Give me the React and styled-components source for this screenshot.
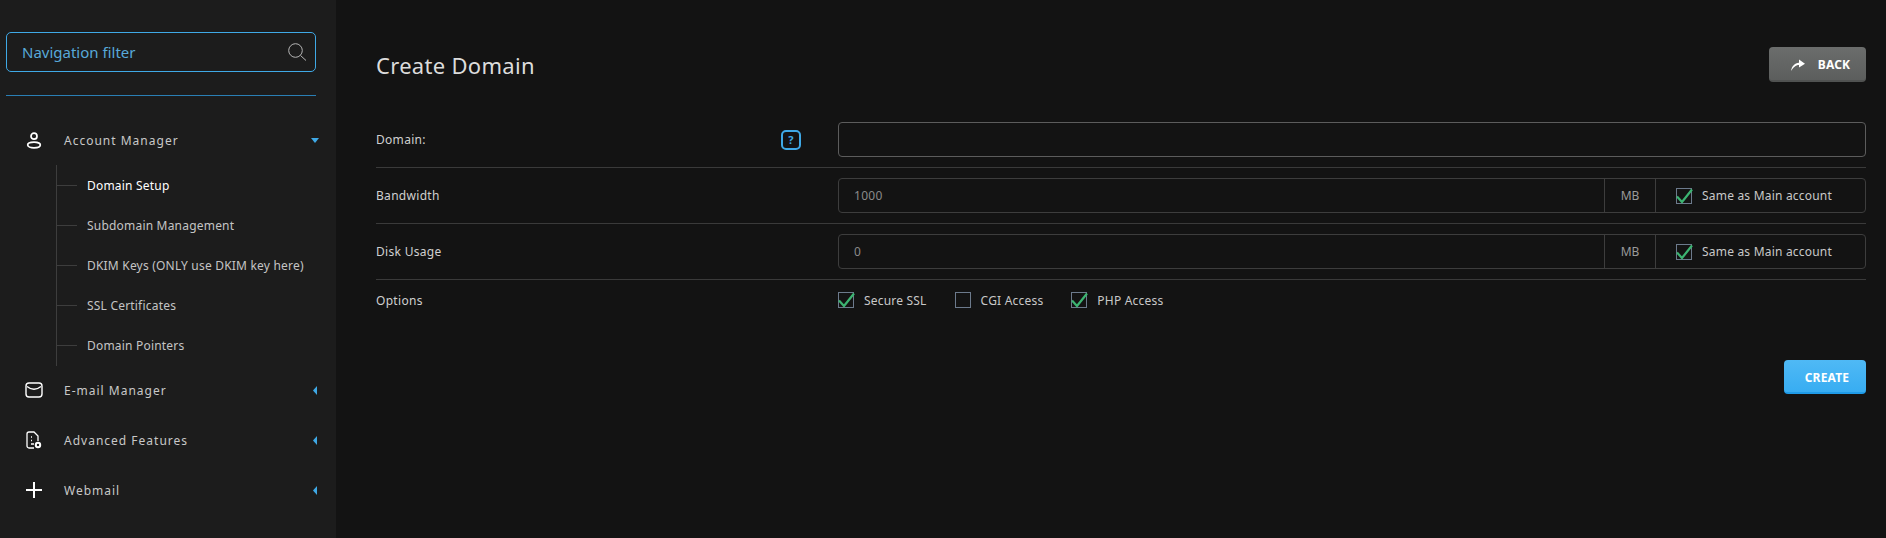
import React from "react";
import styled, { createGlobalStyle } from "styled-components";

const Global = createGlobalStyle`
  html, body { margin: 0; padding: 0; background: #131313; }
  body { font-family: "Noto Sans", "Open Sans", sans-serif; }
  * { box-sizing: border-box; }
`;

const Page = styled.div`
  display: flex;
  width: 1886px;
  height: 538px;
  overflow: hidden;
  background: #131313;
`;
const Sidebar = styled.aside`
  width: 336px;
  flex: none;
  background: #1c1c1c;
  padding: 32px 0 0 6px;
`;
const Filter = styled.div`
  width: 310px;
  height: 40px;
  border: 1px solid #3fa9e6;
  border-radius: 5px;
  display: flex;
  align-items: center;
  justify-content: space-between;
  padding: 0 9px 0 15px;
  color: #58a9d9;
  font-size: 15px;
`;
const Rule = styled.div`
  width: 310px;
  height: 1px;
  background: #2a7fb5;
  margin: 23px 0 25px;
`;
const NavRow = styled.div`
  width: 313px;
  height: ${(p) => p.$h}px;
  display: flex;
  align-items: center;
  padding-left: 19px;
  color: #c8c8c8;
  font-size: 12px;
  letter-spacing: 1px;
`;
const NavIcon = styled.span`
  width: 18px;
  height: 20px;
  margin-right: 21px;
  display: flex;
  align-items: center;
  justify-content: center;
  color: #fff;
`;
const NavLabel = styled.span`
  flex: 1;
`;
const SubList = styled.div`
  margin: 6px 0 4px 50px;
  border-left: 1px solid #3d3d3d;
  height: 201px;
`;
const SubItem = styled.div`
  height: 40px;
  display: flex;
  align-items: center;
  font-size: 12px;
  letter-spacing: 0.2px;
  color: ${(p) => (p.$active ? "#ffffff" : "#c4c4c4")};
  &::before {
    content: "";
    width: 20px;
    height: 1px;
    background: #3d3d3d;
    margin-right: 10px;
  }
`;
const Main = styled.main`
  flex: 1;
  padding: 47px 20px 0 40px;
  color: #d0d0d0;
`;
const Header = styled.div`
  display: flex;
  align-items: center;
  justify-content: space-between;
  height: 35px;
  margin-bottom: 40px;
`;
const Title = styled.h1`
  margin: 0;
  font-size: 22px;
  font-weight: 400;
  letter-spacing: 0.3px;
  color: #dcdcdc;
`;
const Button = styled.button`
  height: ${(p) => p.$h}px;
  width: ${(p) => p.$w}px;
  border: none;
  border-bottom: 2px solid ${(p) => p.$edge};
  border-radius: 4px;
  background: ${(p) => p.$bg};
  color: #fff;
  font: 700 12px "Noto Sans", sans-serif;
  letter-spacing: 0.2px;
  display: flex;
  align-items: center;
  justify-content: center;
  gap: 13px;
  padding: 2px 0 0 ${(p) => p.$pad}px;
`;
const Row = styled.div`
  display: flex;
  align-items: center;
  padding-bottom: ${(p) => (p.$last ? 0 : 10)}px;
  margin-bottom: ${(p) => (p.$last ? 0 : 10)}px;
  border-bottom: ${(p) => (p.$last ? "none" : "1px solid #3a3a3a")};
`;
const Label = styled.div`
  width: 462px;
  flex: none;
  display: flex;
  align-items: center;
  justify-content: space-between;
  padding-right: 37px;
  font-size: 12px;
  letter-spacing: 0.3px;
  color: #d0d0d0;
`;
const Help = styled.span`
  width: 20px;
  height: 20px;
  border: 2px solid #3fa9e6;
  border-radius: 5px;
  color: #3fa9e6;
  font-size: 11px;
  font-weight: 700;
  display: flex;
  align-items: center;
  justify-content: center;
`;
const Group = styled.div`
  flex: 1;
  height: 35px;
  display: flex;
  border: 1px solid ${(p) => (p.$strong ? "#5c5c5c" : "#3d3d3d")};
  border-radius: 4px;
`;
const Value = styled.div`
  flex: 1;
  display: flex;
  align-items: center;
  padding-left: 15px;
  font-size: 12px;
  letter-spacing: 0.3px;
  color: #8a8a8a;
`;
const Unit = styled.div`
  width: 52px;
  display: flex;
  align-items: center;
  justify-content: center;
  border-left: 1px solid #3d3d3d;
  border-right: 1px solid #3d3d3d;
  font-size: 12px;
  color: #9a9a9a;
`;
const Same = styled.div`
  width: 209px;
  display: flex;
  align-items: center;
  padding-left: 20px;
`;
const Check = styled.label`
  display: flex;
  align-items: center;
  gap: 10px;
  font-size: 12px;
  letter-spacing: 0.2px;
  color: #c8c8c8;
`;
const Box = styled.span`
  width: 16px;
  height: 16px;
  flex: none;
  border: 1px solid #6c7a8c;
  position: relative;
`;
const Tick = styled.svg`
  position: absolute;
  left: -1px;
  top: -2px;
`;
const Options = styled.div`
  display: flex;
  gap: 28px;
  height: 20px;
  align-items: center;
  letter-spacing: 0;
`;
const Footer = styled.div`
  display: flex;
  justify-content: flex-end;
  margin-top: 50px;
`;

const Checkbox = ({ on, children }) => (
  <Check>
    <Box>
      {on && (
        <Tick width="17" height="18" viewBox="0 0 17 18">
          <path d="M1 9.5 L6 15 L16 2.5" fill="none" stroke="#3cb371" strokeWidth="2.2" />
        </Tick>
      )}
    </Box>
    {children}
  </Check>
);

const OpenCaret = styled.svg`
  flex: none;
`;
const ClosedCaret = styled.svg`
  flex: none;
  margin-right: 2px;
`;
const Caret = ({ open }) =>
  open ? (
    <OpenCaret width="8" height="5" viewBox="0 0 8 5"><path d="M0 0H8L4 5Z" fill="#3fa9e6" /></OpenCaret>
  ) : (
    <ClosedCaret width="4" height="9" viewBox="0 0 4 9"><path d="M4 0V9L0 4.5Z" fill="#3fa9e6" /></ClosedCaret>
  );

const icons = {
  user: (
    <svg width="16" height="17" viewBox="0 0 16 17" fill="none" stroke="#fff" strokeWidth="1.7">
      <circle cx="8" cy="4.2" r="3" />
      <ellipse cx="8" cy="13" rx="6.3" ry="2.8" />
    </svg>
  ),
  mail: (
    <svg width="18" height="16" viewBox="0 0 18 16" fill="none" stroke="#fff" strokeWidth="1.4">
      <rect x="1" y="1" width="16" height="14" rx="3" />
      <path d="M2 4.5 Q9 10 16 4.5" />
    </svg>
  ),
  doc: (
    <svg width="16" height="18" viewBox="0 0 16 18" fill="none" stroke="#fff" strokeWidth="1.3">
      <path d="M8 17H3a2 2 0 0 1-2-2V3a2 2 0 0 1 2-2h5l4 4v5" />
      <path d="M5 6h1M5 9.5h1M5 13h3" strokeWidth="1.5" />
      <circle cx="12" cy="14" r="2.2" strokeWidth="2" />
    </svg>
  ),
  plus: (
    <svg width="16" height="16" viewBox="0 0 16 16" stroke="#fff" strokeWidth="2">
      <path d="M8 0V16M0 8H16" />
    </svg>
  ),
};

const Nav = ({ icon, open, h, children }) => (
  <NavRow $h={h}>
    <NavIcon>{icons[icon]}</NavIcon>
    <NavLabel>{children}</NavLabel>
    <Caret open={open} />
  </NavRow>
);

const subs = [
  "Domain Setup",
  "Subdomain Management",
  "DKIM Keys (ONLY use DKIM key here)",
  "SSL Certificates",
  "Domain Pointers",
];

export default function App() {
  return (
    <Page>
      <Global />
      <Sidebar>
        <Filter>
          Navigation filter
          <svg width="18" height="18" viewBox="0 0 18 18" fill="none" stroke="#b5b5b5" strokeWidth="1">
            <circle cx="7.500" cy="7.500" r="6.800" />
            <path d="M12.500 12.500L18 17.500" />
          </svg>
        </Filter>
        <Rule />
        <Nav icon="user" open h={38}>Account Manager</Nav>
        <SubList>
          {subs.map((s, i) => (
            <SubItem key={s} $active={i === 0}>{s}</SubItem>
          ))}
        </SubList>
        <Nav icon="mail" h={40}>E-mail Manager</Nav>
        <NavRow $h={10} />
        <Nav icon="doc" h={40}>Advanced Features</Nav>
        <NavRow $h={10} />
        <Nav icon="plus" h={40}>Webmail</Nav>
      </Sidebar>
      <Main>
        <Header>
          <Title>Create Domain</Title>
          <Button $w={97} $h={35} $pad={6} $bg="linear-gradient(#6b6d6c, #5c5e5d)" $edge="#505251">
            <svg width="14" height="12" viewBox="0 0 14 12"><path d="M0 12C1 7 3.500 4.200 8 3.800V0.500L14 4.800L8 8.500V6C4.500 6 2.500 8.500 0 12Z" fill="#fff" /></svg>
            BACK
          </Button>
        </Header>
        <Row>
          <Label>Domain:<Help>?</Help></Label>
          <Group $strong />
        </Row>
        <Row>
          <Label>Bandwidth</Label>
          <Group>
            <Value>1000</Value>
            <Unit>MB</Unit>
            <Same><Checkbox on>Same as Main account</Checkbox></Same>
          </Group>
        </Row>
        <Row>
          <Label>Disk Usage</Label>
          <Group>
            <Value>0</Value>
            <Unit>MB</Unit>
            <Same><Checkbox on>Same as Main account</Checkbox></Same>
          </Group>
        </Row>
        <Row $last>
          <Label>Options</Label>
          <Options>
            <Checkbox on>Secure SSL</Checkbox>
            <Checkbox>CGI Access</Checkbox>
            <Checkbox on>PHP Access</Checkbox>
          </Options>
        </Row>
        <Footer>
          <Button $w={82} $h={34} $pad={4} $bg="linear-gradient(#4fb9f5, #38adf2)" $edge="#1f9be8">CREATE</Button>
        </Footer>
      </Main>
    </Page>
  );
}
